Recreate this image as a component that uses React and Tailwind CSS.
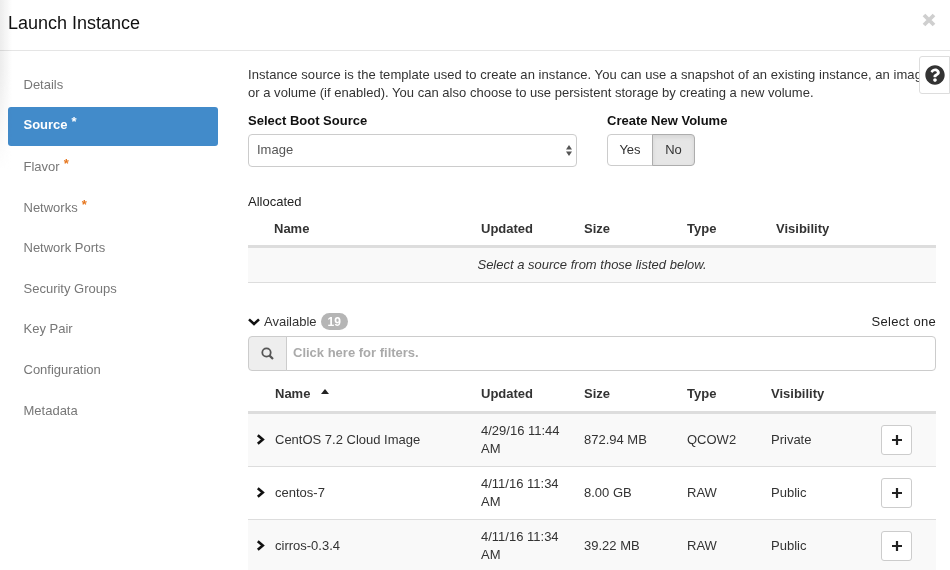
import React from "react";
import { FaQuestionCircle } from "react-icons/fa";

const nav = [
  { label: "Details" },
  { label: "Source", star: true, active: true },
  { label: "Flavor", star: true },
  { label: "Networks", star: true },
  { label: "Network Ports" },
  { label: "Security Groups" },
  { label: "Key Pair" },
  { label: "Configuration" },
  { label: "Metadata" },
];

const rows = [
  ["CentOS 7.2 Cloud Image", "4/29/16 11:44 AM", "872.94 MB", "QCOW2", "Private"],
  ["centos-7", "4/11/16 11:34 AM", "8.00 GB", "RAW", "Public"],
  ["cirros-0.3.4", "4/11/16 11:34 AM", "39.22 MB", "RAW", "Public"],
];

function ChevronRight() {
  return (
    <svg width="9" height="11" viewBox="0 0 9 11" className="mb-[2px] text-[#111]">
      <path d="M1.8 1.2 L6.8 5.5 L1.8 9.8" fill="none" stroke="currentColor" strokeWidth="2.6" />
    </svg>
  );
}

function ChevronDown() {
  return (
    <svg width="12" height="8" viewBox="0 0 12 8" className="text-[#111]">
      <path d="M1 1.4 L6 6 L11 1.4" fill="none" stroke="currentColor" strokeWidth="2.6" />
    </svg>
  );
}

function Plus() {
  return (
    <svg width="10" height="10" viewBox="0 0 10 10" className="text-[#222]">
      <path d="M5 0 V10 M0 5 H10" fill="none" stroke="currentColor" strokeWidth="2.2" />
    </svg>
  );
}

export default function App() {
  return (
    <div className="relative h-[570px] w-[950px] overflow-hidden bg-white text-[13px] leading-[18px] text-[#333] font-['Liberation_Sans',Arial,sans-serif]">
      <div className="pointer-events-none absolute left-0 top-0 h-[170px] w-[12px] bg-[linear-gradient(to_right,#ececec,transparent)] mix-blend-multiply [mask-image:linear-gradient(to_bottom,black_40%,transparent)]" />

      <header className="flex h-[51px] items-start justify-between border-b border-[#e5e5e5] pl-2 pr-[14px]">
        <h1 className="mt-[13px] text-[18px] leading-5 text-[#111]">Launch Instance</h1>
        <svg width="14" height="14" viewBox="0 0 14 14" className="mt-[13px] text-[#cfcfcf]">
          <path d="M2 2 L12 12 M12 2 L2 12" fill="none" stroke="currentColor" strokeWidth="3.8" />
        </svg>
      </header>

      <button className="absolute right-0 top-[56px] flex h-[38px] w-[31px] items-center justify-center rounded-l-[3px] border border-[#ddd] bg-white text-[#333]">
        <FaQuestionCircle className="text-[20px]" />
      </button>

      <div className="flex">
        <nav className="ml-2 mt-[14px] flex w-[210px] shrink-0 flex-col">
          {nav.map((n) => (
            <div
              key={n.label}
              className={
                n.active
                  ? "mb-[1.6px] mt-[1.4px] flex h-[39px] items-center rounded-[3px] bg-[#428bca] pl-[15.5px] pb-[2px] font-bold text-white"
                  : "mb-[1.6px] flex h-[39px] items-center pl-[15.5px] text-[#777]"
              }
            >
              <span>{n.label}</span>
              {n.star && (
                <span className={n.active ? "mb-[6px] ml-1 font-bold text-white" : "mb-[6px] ml-1 font-bold text-[#e6761e]"}>*</span>
              )}
            </div>
          ))}
        </nav>

        <main className="ml-[30px] w-[688px] shrink-0 pt-[15px]">
          <p className="w-[720px] whitespace-nowrap">
            <span className="tracking-[0.06px]">Instance source is the template used to create an instance. You can use a snapshot of an existing instance, an image</span>
            <br />
            <span className="tracking-[0.02px]">or a volume (if enabled). You can also choose to use persistent storage by creating a new volume.</span>
          </p>

          <div className="mt-[10px] flex">
            <div className="w-[359px]">
              <div className="font-bold text-[#111]">Select Boot Source</div>
              <div className="mt-[4px] flex h-[33px] w-[329px] items-center justify-between rounded-[4px] border border-[#ccc] pl-2 pr-1 text-[#555]">
                <span className="-mt-px">Image</span>
                <svg width="6" height="11" viewBox="0 0 6 11" className="text-[#555]">
                  <path d="M3 0 L6 4.5 H0 Z M3 11 L0 6.5 H6 Z" fill="currentColor" />
                </svg>
              </div>
            </div>
            <div>
              <div className="font-bold text-[#111]">Create New Volume</div>
              <div className="mt-[4px] flex h-[32px]">
                <div className="flex w-[46px] items-center justify-center rounded-l-[4px] border border-[#ccc] bg-white">Yes</div>
                <div className="-ml-px flex w-[43px] items-center justify-center rounded-r-[4px] border border-[#adadad] bg-[#e6e6e6] shadow-[inset_0_2px_4px_rgba(0,0,0,0.08)]">No</div>
              </div>
            </div>
          </div>

          <div className="mt-[26px] text-[#222]">Allocated</div>
          <table className="mt-[3px] w-full table-fixed border-collapse">
            <colgroup>
              <col className="w-[26px]" />
              <col className="w-[207px]" />
              <col className="w-[103px]" />
              <col className="w-[103px]" />
              <col className="w-[89px]" />
              <col />
            </colgroup>
            <thead>
              <tr className="h-[32px] border-b-[3px] border-[#ddd] text-left font-bold text-[#333]">
                <th></th>
                <th className="pb-[1px]">Name</th>
                <th className="pb-[1px]">Updated</th>
                <th className="pb-[1px]">Size</th>
                <th className="pb-[1px]">Type</th>
                <th className="pb-[1px]">Visibility</th>
              </tr>
            </thead>
            <tbody>
              <tr className="h-[36px] border-b border-[#ddd] bg-[#f9f9f9]">
                <td colSpan={6} className="text-center italic">Select a source from those listed below.</td>
              </tr>
            </tbody>
          </table>

          <div className="mt-[30px] flex items-center justify-between">
            <div className="flex items-center">
              <ChevronDown />
              <span className="ml-[4px]">Available</span>
              <span className="ml-1 flex h-[17px] items-center rounded-[9px] bg-[#b5b5b5] px-[7px] text-[12px] font-bold text-white">19</span>
            </div>
            <span className="tracking-[0.3px] text-[#222]">Select one</span>
          </div>

          <div className="mt-[5px] flex h-[35px]">
            <div className="flex w-[39px] items-center justify-center rounded-l-[4px] border border-[#ccc] bg-[#eee] text-[#555]">
              <svg width="13" height="13" viewBox="0 0 13 13">
                <circle cx="5.5" cy="5.5" r="4.2" fill="none" stroke="currentColor" strokeWidth="1.8" />
                <path d="M8.6 8.6 L12 12" fill="none" stroke="currentColor" strokeWidth="2.2" />
              </svg>
            </div>
            <div className="-ml-px flex flex-1 items-center rounded-r-[4px] border border-[#ccc] pl-[6px] font-bold text-[#aaa]">Click here for filters.</div>
          </div>

          <table className="mt-[8px] w-full table-fixed border-collapse">
            <colgroup>
              <col className="w-[27px]" />
              <col className="w-[206px]" />
              <col className="w-[103px]" />
              <col className="w-[103px]" />
              <col className="w-[84px]" />
              <col className="w-[110px]" />
              <col />
            </colgroup>
            <thead>
              <tr className="h-[34px] border-b-[3px] border-[#ddd] text-left font-bold text-[#333]">
                <th></th>
                <th className="pb-[2px]">
                  <span className="inline-flex items-center">
                    Name
                    <svg width="8" height="5" viewBox="0 0 8 5" className="mb-[5px] ml-[11px] text-[#222]">
                      <path d="M4 0 L8 5 H0 Z" fill="currentColor" />
                    </svg>
                  </span>
                </th>
                <th className="pb-[2px]">Updated</th>
                <th className="pb-[2px]">Size</th>
                <th className="pb-[2px]">Type</th>
                <th className="pb-[2px]">Visibility</th>
                <th></th>
              </tr>
            </thead>
            <tbody>
              {rows.map((r, i) => (
                <tr
                  key={r[0]}
                  className={
                    i === 0
                      ? "h-[54px] border-b border-[#ddd] bg-[#f9f9f9]"
                      : i === 1
                        ? "h-[53px] border-b border-[#ddd] bg-white"
                        : "h-[53px] border-b border-[#ddd] bg-[#f9f9f9]"
                  }
                >
                  <td className="pl-[8px]"><ChevronRight /></td>
                  <td>{r[0]}</td>
                  <td className="pr-2">{r[1]}</td>
                  <td>{r[2]}</td>
                  <td>{r[3]}</td>
                  <td>{r[4]}</td>
                  <td>
                    <div className="flex h-[30px] w-[31px] items-center justify-center rounded-[3px] border border-[#ccc] bg-white">
                      <Plus />
                    </div>
                  </td>
                </tr>
              ))}
            </tbody>
          </table>
        </main>
      </div>
    </div>
  );
}
